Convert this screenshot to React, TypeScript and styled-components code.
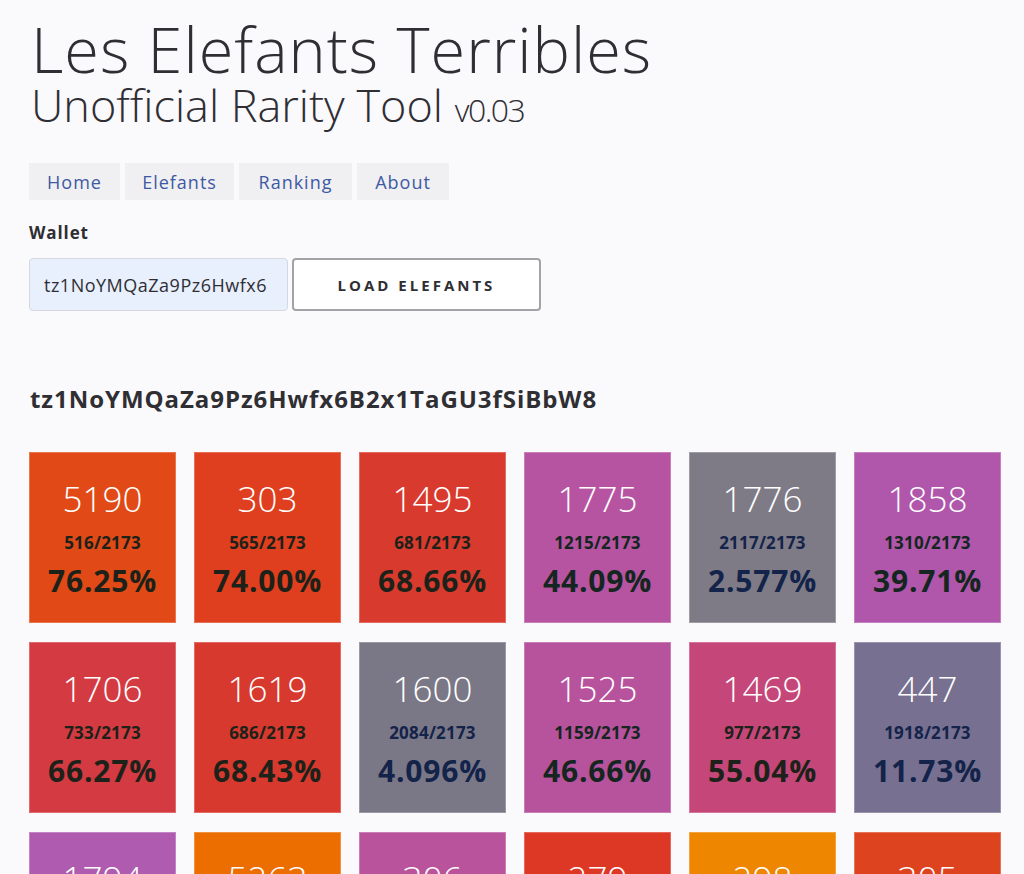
import React from "react";
import styled, { createGlobalStyle } from "styled-components";

const Global = createGlobalStyle`
  html, body { margin: 0; padding: 0; background: #faf9fc; }
  body { font-family: "Open Sans", "Liberation Sans", sans-serif; color: #2f2e33; }
  * { box-sizing: border-box; }
`;

const Page = styled.div`
  padding: 16px 30px 0 29px;
`;

const Title = styled.h1`
  margin: 0 0 0 2px;
  font-size: 63px;
  line-height: 66px;
  font-weight: 300;
  color: #2f2e33;
  letter-spacing: 1px;
`;

const Subtitle = styled.h2`
  margin: 0 0 0 2px;
  font-size: 45px;
  line-height: 46px;
  font-weight: 300;
  color: #2f2e33;
  letter-spacing: 0;
`;

const Version = styled.span`
  font-size: 32px;
  line-height: 1;
  letter-spacing: -1.5px;
`;

const Nav = styled.nav`
  display: flex;
  gap: 5px;
  margin-top: 35px;
`;

const NavButton = styled.a<{ $w: number }>`
  display: flex;
  align-items: center;
  justify-content: center;
  width: ${(p) => p.$w}px;
  height: 37px;
  background: #f0eff2;
  color: #3d5aa3;
  font-size: 18px;
  letter-spacing: 1px;
  text-decoration: none;
`;

const Label = styled.div`
  margin-top: 23px;
  font-size: 17px;
  font-weight: 700;
  color: #2f2e33;
  line-height: 20px;
  letter-spacing: 0.9px;
`;

const FormRow = styled.div`
  display: flex;
  gap: 4px;
  margin-top: 15px;
`;

const Input = styled.input`
  width: 259px;
  height: 53px;
  padding: 0 14px;
  background: #e8f0fe;
  border: 1px solid #d6d8de;
  border-radius: 4px;
  font-family: inherit;
  font-size: 18px;
  letter-spacing: 0.5px;
  color: #2f2e33;
  outline: none;
`;

const LoadButton = styled.button`
  width: 249px;
  height: 53px;
  background: #ffffff;
  border: 2px solid #a3a2a6;
  border-radius: 4px;
  font-family: inherit;
  font-size: 15px;
  font-weight: 700;
  letter-spacing: 3px;
  color: #2f2e33;
`;

const WalletHeading = styled.h3`
  margin: 73px 0 0 1px;
  font-size: 24px;
  font-weight: 700;
  line-height: 30px;
  letter-spacing: 0.95px;
  color: #2f2e33;
`;

const Grid = styled.div`
  display: grid;
  grid-template-columns: repeat(6, 147px);
  column-gap: 18px;
  row-gap: 19px;
  margin-top: 38px;
`;

const Tile = styled.div<{ $bg: string; $ink: string }>`
  height: 171px;
  background: ${(p) => p.$bg};
  border: 1px solid rgba(255, 255, 255, 0.25);
  display: flex;
  flex-direction: column;
  align-items: center;
  padding-top: 22px;
  color: ${(p) => p.$ink};
`;

const Num = styled.div`
  font-size: 35px;
  font-weight: 300;
  line-height: 48px;
  color: #ffffff;
`;

const Frac = styled.div`
  margin-top: 10px;
  font-size: 17px;
  font-weight: 700;
  line-height: 20px;
  letter-spacing: 0.2px;
`;

const Pct = styled.div`
  margin-top: 8px;
  font-size: 30px;
  font-weight: 700;
  line-height: 40px;
  letter-spacing: 0.8px;
`;

const WARM = "#1c2219";
const COOL = "#13234a";

const tiles = [
  ["5190", "516/2173", "76.25%", "#e14a17", WARM],
  ["303", "565/2173", "74.00%", "#df3f1e", WARM],
  ["1495", "681/2173", "68.66%", "#d93a2e", WARM],
  ["1775", "1215/2173", "44.09%", "#b654a2", "#14261f"],
  ["1776", "2117/2173", "2.577%", "#7e7b86", COOL],
  ["1858", "1310/2173", "39.71%", "#b056ab", "#14261f"],
  ["1706", "733/2173", "66.27%", "#d43a42", WARM],
  ["1619", "686/2173", "68.43%", "#d8392e", WARM],
  ["1600", "2084/2173", "4.096%", "#7a7786", COOL],
  ["1525", "1159/2173", "46.66%", "#b7529c", "#14261f"],
  ["1469", "977/2173", "55.04%", "#c5477a", WARM],
  ["447", "1918/2173", "11.73%", "#777090", COOL],
  ["1794", "1347/2173", "38.01%", "#ae5bb0", "#14261f"],
  ["5263", "392/2173", "81.96%", "#ec6e00", WARM],
  ["306", "1188/2173", "45.33%", "#b9539c", "#14261f"],
  ["279", "621/2173", "71.42%", "#dd3726", WARM],
  ["298", "281/2173", "87.07%", "#ef8600", WARM],
  ["305", "540/2173", "75.15%", "#de431f", WARM],
];

const navItems: [string, number][] = [
  ["Home", 91],
  ["Elefants", 109],
  ["Ranking", 113],
  ["About", 92],
];

export default function App() {
  return (
    <Page>
      <Global />
      <Title>Les Elefants Terribles</Title>
      <Subtitle>
        Unofficial Rarity Tool <Version>v0.03</Version>
      </Subtitle>
      <Nav>
        {navItems.map(([t, w]) => (
          <NavButton key={t} $w={w} href="#">
            {t}
          </NavButton>
        ))}
      </Nav>
      <Label>Wallet</Label>
      <FormRow>
        <Input defaultValue="tz1NoYMQaZa9Pz6Hwfx6" />
        <LoadButton>LOAD ELEFANTS</LoadButton>
      </FormRow>
      <WalletHeading>tz1NoYMQaZa9Pz6Hwfx6B2x1TaGU3fSiBbW8</WalletHeading>
      <Grid>
        {tiles.map(([n, f, p, bg, ink]) => (
          <Tile key={n} $bg={bg} $ink={ink}>
            <Num>{n}</Num>
            <Frac>{f}</Frac>
            <Pct>{p}</Pct>
          </Tile>
        ))}
      </Grid>
    </Page>
  );
}
